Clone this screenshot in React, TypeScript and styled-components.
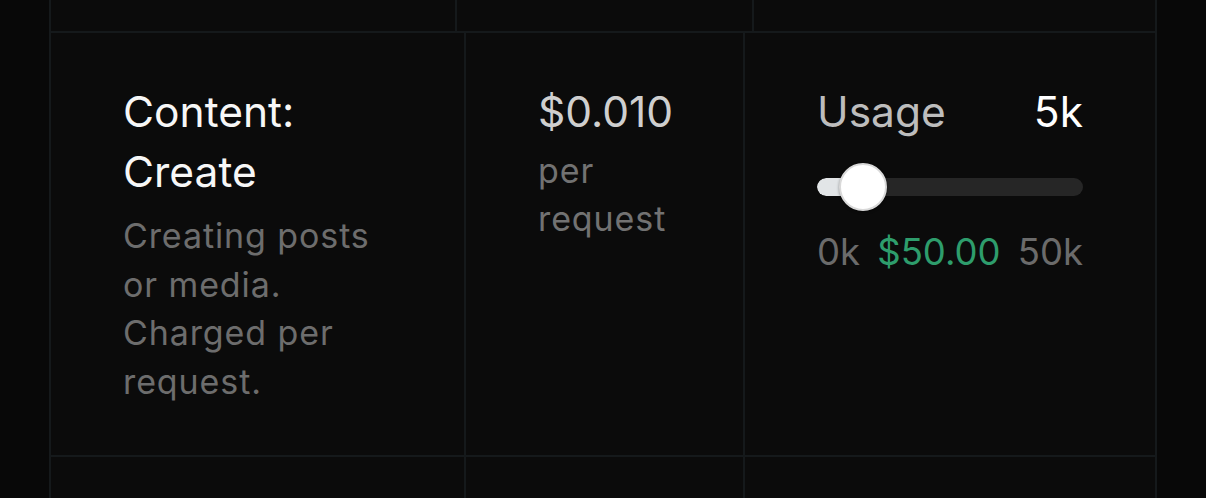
import React from "react";
import styled, { createGlobalStyle } from "styled-components";

const Global = createGlobalStyle`
  html, body { margin: 0; padding: 0; background: #080808; }
  body { font-family: Inter, "Noto Sans", sans-serif; -webkit-font-smoothing: antialiased; }
`;

const Page = styled.div`
  width: 1206px;
  height: 498px;
  overflow: hidden;
  background: #080808;
  padding-left: 49px;
  box-sizing: border-box;
`;

const Table = styled.div`
  width: 1108px;
  background: #15191b;
  padding: 0 2px;
  box-sizing: border-box;
  display: flex;
  flex-direction: column;
  gap: 2px;
`;

const Row = styled.div<{ $cols: string; $h?: number }>`
  display: grid;
  grid-template-columns: ${(p) => p.$cols};
  gap: 2px;
  ${(p) => (p.$h ? `height: ${p.$h}px;` : "")}
`;

const Cell = styled.div`
  background: #0b0b0b;
  padding: 49px 72px 48px;
  box-sizing: border-box;
  min-width: 0;
`;

const EmptyCell = styled.div`
  background: #0b0b0b;
`;

const Title = styled.div`
  font-size: 42.5px;
  line-height: 60px;
  color: #f7f7f7;
`;

const Desc = styled.div`
  margin-top: 10px;
  font-size: 34px;
  letter-spacing: 0.9px;
  line-height: 48.7px;
  color: #6d6d6d;
`;

const Price = styled.div`
  font-size: 42.5px;
  line-height: 60px;
  color: #cfcfcf;
`;

const Unit = styled.div`
  font-size: 34px;
  letter-spacing: 0.9px;
  line-height: 48px;
  color: #727272;
  margin-top: 5px;
`;

const UsageHead = styled.div`
  display: flex;
  justify-content: space-between;
  font-size: 42.5px;
  line-height: 60px;
`;

const UsageLabel = styled.span`
  color: #bdbdbd;
`;

const UsageValue = styled.span`
  color: #ffffff;
`;

const Track = styled.div`
  position: relative;
  margin-top: 21px;
  height: 48px;
  display: flex;
  align-items: center;
`;

const Rail = styled.div`
  width: 100%;
  height: 18px;
  border-radius: 9px;
  background: #262626;
  overflow: hidden;
`;

const Fill = styled.div`
  height: 100%;
  background: #e2e5e7;
  border-radius: 9px;
`;

const Thumb = styled.div`
  position: absolute;
  top: 0;
  width: 48px;
  height: 48px;
  border-radius: 50%;
  background: #ffffff;
  border: 2px solid #d9d9d9;
  box-sizing: border-box;
  box-shadow: 0 1px 3px rgba(0, 0, 0, 0.4);
`;

const Scale = styled.div`
  margin-top: 17px;
  display: flex;
  justify-content: space-between;
  font-size: 36.5px;
  line-height: 48px;
  color: #6b6b6b;
`;

const Cost = styled.span`
  color: #2e9d6c;
`;

export default function App() {
  const value = 5;
  const max = 50;
  const pct = value / max;
  const railW = 266;
  const thumbSize = 48;
  const thumbLeft = pct * (railW - thumbSize);
  const fillW = thumbLeft + thumbSize / 2;
  return (
    <>
      <Global />
      <Page>
        <Table>
          <Row $cols="404px 295px 401px" $h={31}>
            <EmptyCell />
            <EmptyCell />
            <EmptyCell />
          </Row>
          <Row $cols="413px 277px 410px">
            <Cell>
              <Title>Content: Create</Title>
              <Desc>Creating posts or media. Charged per request.</Desc>
            </Cell>
            <Cell>
              <Price>$0.010</Price>
              <Unit>per request</Unit>
            </Cell>
            <Cell>
              <UsageHead>
                <UsageLabel>Usage</UsageLabel>
                <UsageValue>5k</UsageValue>
              </UsageHead>
              <Track>
                <Rail>
                  <Fill style={{ width: `${fillW}px` }} />
                </Rail>
                <Thumb style={{ left: `${thumbLeft}px` }} />
              </Track>
              <Scale>
                <span>0k</span>
                <Cost>$50.00</Cost>
                <span>50k</span>
              </Scale>
            </Cell>
          </Row>
          <Row $cols="413px 277px 410px" $h={60}>
            <EmptyCell />
            <EmptyCell />
            <EmptyCell />
          </Row>
        </Table>
      </Page>
    </>
  );
}
